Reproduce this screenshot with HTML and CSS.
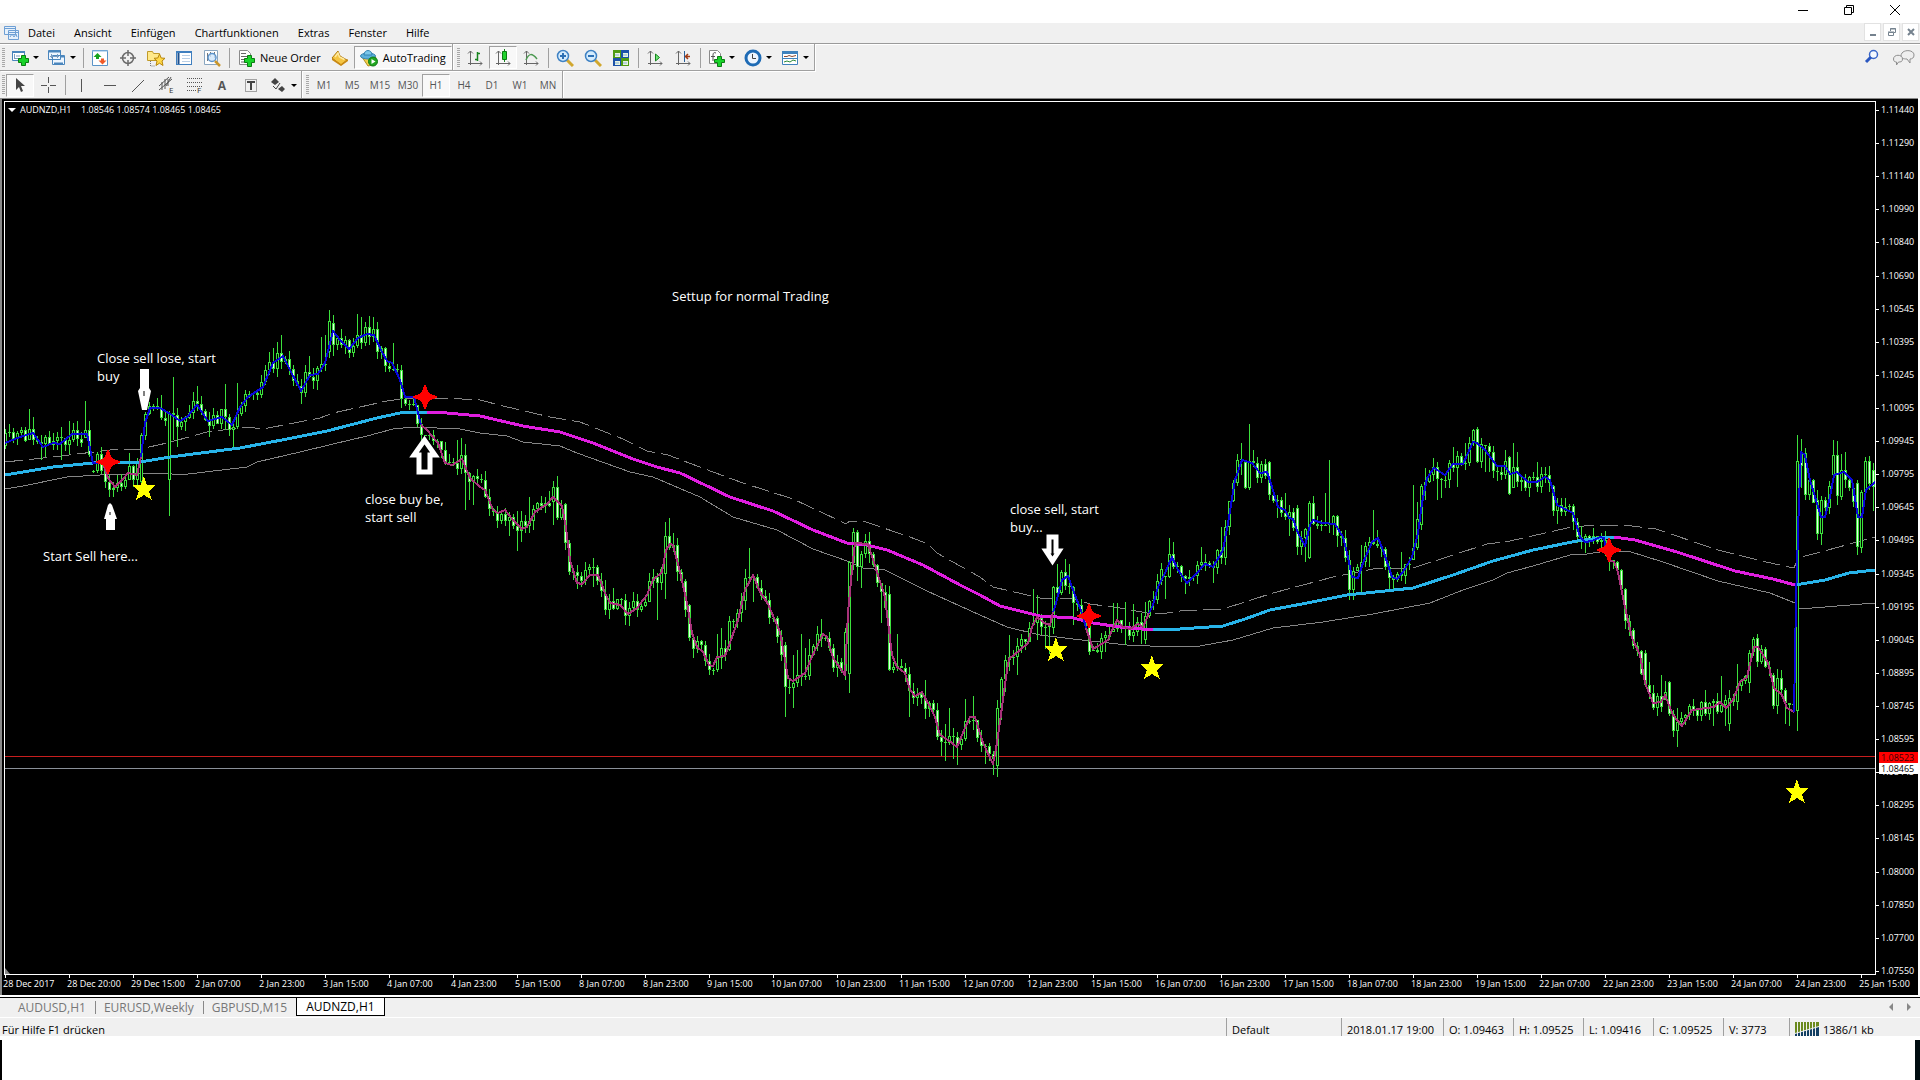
FILE: index.html
```html
<!DOCTYPE html>
<html lang="de">
<head>
  <meta charset="utf-8">
  <title>AUDNZD,H1</title>
  <link rel="stylesheet" href="styles.css">
</head>

<body>
  <div class="titlebar">
    <button class="win-btn" aria-label="Minimize"><svg width="12" height="12"><path d="M1 6.5h10" stroke="#000"/></svg></button>
    <button class="win-btn" aria-label="Restore"><svg width="12" height="12" fill="none" stroke="#000"><path d="M1.5 3.5h7v7h-7zM3.5 3V1.500h7v7H9"/></svg></button>
    <button class="win-btn" aria-label="Close"><svg width="12" height="12"><path d="M1 1l10 10M11 1L1 11" stroke="#000"/></svg></button>
  </div>

  <nav class="menubar">
    <svg class="app-icon" width="16" height="16" fill="#e6f1fc" stroke="#6e9fd4"><path d="M.5 1.500h11v8H.5zM.5 3.500h11M4.500 5.500h10v9h-10zM4.500 7.500h10"/><path d="M6 12l2-3 2 3 2-3 1 3" fill="none"/></svg>
    <button>Datei</button>
    <button>Ansicht</button>
    <button>Einfügen</button>
    <button>Chartfunktionen</button>
    <button>Extras</button>
    <button>Fenster</button>
    <button>Hilfe</button>
    <div class="mdi-buttons">
      <button aria-label="Minimize chart"><svg width="10" height="10"><path d="M2 8h6" stroke="#75828e" stroke-width="2"/></svg></button>
      <button aria-label="Restore chart"><svg width="10" height="10" fill="none" stroke="#75828e"><path d="M1.500 5.500h5v3h-5zM1 5h6M3.500 4V1.500h5v4H7M3 2h6"/></svg></button>
      <button aria-label="Close chart"><svg width="10" height="10"><path d="M2 2l6 6M8 2L2 8" stroke="#75828e" stroke-width="2"/></svg></button>
    </div>
  </nav>

  <div class="toolbars">
    <div class="toolbar-rows">
      <div class="toolbar">
        <div class="group">
          <span class="grip"></span>
          <button class="tool drop" aria-label="New chart"><svg width="18" height="18"><path d="M1.500 2.500h12v9h-12z" fill="#fff" stroke="#4a86bd"/><path d="M1 3h13" stroke="#4a86bd" stroke-width="2"/><path d="M3.500 5v5M3 9.500h8M5 7h4" stroke="#7b9cc0" fill="none"/><path d="M10.500 6.500h4v3h3v4h-3v3h-4v-3h-3v-4h3z" fill="#19d32a" stroke="#0b7d12"/></svg></button>
          <button class="tool drop" aria-label="Profiles"><svg width="18" height="18" fill="#eef6ff" stroke="#4a86bd"><path d="M4.500 6.500h12v9h-12zM.5 1.500h12v9H.5z"/><path d="M1 2.500h12M6 14.500h9M13 7.500h3" stroke-width="2"/><path d="M3.500 5v4M2 7.500h9M9.500 5v4" stroke="#7b9cc0"/></svg></button>
          <span class="sep"></span>
          <button class="tool" aria-label="Market watch"><svg width="18" height="18"><path d="M1.500 1.500h15v15h-15z" fill="#fff" stroke="#5b94c8"/><path d="M1 2h16" stroke="#8ab9e2"/><path d="M6.500 4l4 4H8v2H5V8H2.500z" fill="#16a31d"/><path d="M11.500 15.500l-4-4H10v-2h3v2h2.500z" fill="#f05a28"/></svg></button>
          <button class="tool" aria-label="Data window"><svg width="18" height="18" fill="none" stroke="#6b6b6b"><circle cx="9" cy="9" r="5.500" stroke-width="1.500"/><path d="M9 1v6M9 11v6M1 9h6M11 9h6" stroke-width="1.500"/></svg></button>
          <button class="tool" aria-label="Navigator"><svg width="18" height="18"><path d="M.5 2.500h5l1 2h6v7H.5z" fill="#ffe98a" stroke="#c09a2a"/><path d="M3.500 12v5h4" fill="none" stroke="#777" stroke-dasharray="1 1"/><path d="M12.500 5l1.700 4 3.800.3-3 2.700 1 4.500-3.500-2.300L9 16.500l1-4.500-3-2.700 3.800-.3z" fill="#ffd94a" stroke="#b8860b"/></svg></button>
          <button class="tool" aria-label="Terminal"><svg width="18" height="18"><rect x="1.500" y="2.500" width="15" height="13" fill="#fff" stroke="#3f7fbf"/><path d="M1 3h16" stroke="#3f7fbf" stroke-width="2"/><path d="M3.500 4v11" stroke="#1d4f8c" stroke-width="2"/><path d="M7 6.500h8M7 9.500h8M7 12.500h8" stroke="#b9cfe6"/></svg></button>
          <button class="tool" aria-label="Strategy tester"><svg width="18" height="18"><path d="M1.500 1.500h13v14h-13z" fill="#fff" stroke="#8aa6c0"/><path d="M4.500 4v8M7.500 3v5M11.500 3v6M4 6.500h3" stroke="#777"/><circle cx="9" cy="8.500" r="4" fill="#cfe6fb" fill-opacity=".8" stroke="#5d94cc" stroke-width="1.500"/><path d="M12 12l5 5" stroke="#c9962c" stroke-width="2.500"/></svg></button>
          <span class="sep"></span>
          <button class="tool wide"><svg width="18" height="18"><path d="M2.500 1.500h8l3 3v11h-11z" fill="#fff" stroke="#8a8a8a"/><path d="M4 4.500h5M4 7.500h7M4 10.500h4M4 13h4" stroke="#666"/><path d="M10.500 6.500h4v3h3v4h-3v4h-4v-4h-3v-4h3z" fill="#19d32a" stroke="#0b7d12"/></svg>Neue Order</button>
          <button class="tool" aria-label="MetaEditor"><svg width="18" height="18"><path d="M1 9l6-7 2 5 7 4-6 5z" fill="#f4c542" stroke="#b07a10"/><path d="M1 9v2l9 6 7-5v-2l-7 5z" fill="#c98914"/><path d="M4 8l3-4 1.500 4 5 2.500" fill="none" stroke="#ffeaa0" stroke-width="1.500"/></svg></button>
          <button class="tool wide pressed"><svg width="18" height="18"><path d="M2 8h14l-4 8-4 1z" fill="#f1cf4c" stroke="#b08e20"/><ellipse cx="8" cy="7" rx="7.500" ry="3" fill="#5bb0dc" stroke="#3583b0"/><path d="M4 6c0-6 8-6 8 0z" fill="#7cc7ea" stroke="#3583b0"/><circle cx="13" cy="12.500" r="4.500" fill="#21a621" stroke="#0d7a12"/><path d="M11.500 10l4 2.500-4 2.500z" fill="#fff"/></svg>AutoTrading</button>
        </div>
        <div class="group">
          <span class="grip"></span>
          <button class="tool" aria-label="Bar chart"><svg width="18" height="18" fill="none" stroke="#666"><path d="M4.500 2v14M2 14.500h14M2 4.500l2.500-2.500L7 4.500M14 12.500l2 2-2 2"/><path d="M11.500 3v9M9 10.500h2M12 4.500h2" stroke="#16831d" stroke-width="1.500"/></svg></button>
          <button class="tool pressed" aria-label="Candlesticks"><svg width="18" height="18" fill="none" stroke="#666"><path d="M4.500 2v14M2 14.500h14M2 4.500l2.500-2.500L7 4.500M14 12.500l2 2-2 2"/><path d="M10.500 0v13" stroke="#16831d"/><path d="M8.500 2.500h4v8h-4z" fill="#22d32e" stroke="#0b7d12"/></svg></button>
          <button class="tool" aria-label="Line chart"><svg width="18" height="18" fill="none" stroke="#666"><path d="M4.500 2v14M2 14.500h14M2 4.500l2.500-2.500L7 4.500M14 12.500l2 2-2 2"/><path d="M4 11c3-7 6-7 11-1" stroke="#4b9950" stroke-width="1.500"/></svg></button>
          <span class="sep"></span>
          <button class="tool" aria-label="Zoom in"><svg width="18" height="18"><path d="M11 11l6 6" stroke="#d1a72e" stroke-width="3"/><circle cx="7" cy="7" r="5.500" fill="#d5ecfd" stroke="#3f82c4" stroke-width="1.500"/><path d="M4 7h6M7 4v6" stroke="#2d70b5" stroke-width="2"/></svg></button>
          <button class="tool" aria-label="Zoom out"><svg width="18" height="18"><path d="M11 11l6 6" stroke="#d1a72e" stroke-width="3"/><circle cx="7" cy="7" r="5.500" fill="#d5ecfd" stroke="#3f82c4" stroke-width="1.500"/><path d="M4 7h6" stroke="#2d70b5" stroke-width="2"/></svg></button>
          <button class="tool" aria-label="Tile windows"><svg width="18" height="18"><path d="M1 1h8v8H1zM9 9h8v8H9z" fill="#4f9b14"/><path d="M9 1h8v8H9zM1 9h8v8H1z" fill="#1d52a8"/><path d="M3 4h5v4H3zM11 4h5v4h-5zM3 12h5v4H3zM11 12h5v4h-5z" fill="#eaf4e0"/><path d="M3 6h4M11 6h4M3 14h4M11 14h4" stroke="#86b3d6"/></svg></button>
          <span class="sep"></span>
          <button class="tool" aria-label="Auto scroll"><svg width="18" height="18" fill="none" stroke="#666"><path d="M4.500 2v14M2 14.500h14M2 4.500l2.500-2.500L7 4.500M14 12.500l2 2-2 2"/><path d="M9.500 5l4 3.500-4 3.500z" fill="#6fe678" stroke="#16831d"/></svg></button>
          <button class="tool" aria-label="Chart shift"><svg width="18" height="18" fill="none" stroke="#666"><path d="M4.500 2v14M2 14.500h14M2 4.500l2.500-2.500L7 4.500M14 12.500l2 2-2 2"/><path d="M10.500 2v11" stroke="#27609b"/><path d="M16 7.500h-4M14 5l-2.500 2.500L14 10" stroke="#a03b16" stroke-width="1.500"/></svg></button>
          <span class="sep"></span>
          <button class="tool drop" aria-label="Indicators"><svg width="18" height="18"><path d="M2.500 1.500h8l3 3v10h-11z" fill="#fff" stroke="#8a8a8a"/><path d="M9 4c-2-1-3 0-3 2v6M4 7.500h4" fill="none" stroke="#555"/><path d="M10.500 7.500h4v3h3v3h-3v4h-4v-4h-3v-3h3z" fill="#19d32a" stroke="#0b7d12"/></svg></button>
          <button class="tool drop" aria-label="Periods"><svg width="18" height="18"><circle cx="9" cy="9" r="7" fill="#eef6ff" stroke="#1e6bb5" stroke-width="3"/><path d="M8.500 5v4.500H12" fill="none" stroke="#444"/></svg></button>
          <button class="tool drop" aria-label="Templates"><svg width="18" height="18"><path d="M1.500 2.500h15v13h-15zM1 9.500h16" fill="#fff" stroke="#3f82bd"/><path d="M1 3.500h16" stroke="#3f82bd" stroke-width="3"/><path d="M3 7.500h3l2-1 3 1 4-1" fill="none" stroke="#8c4a30"/><path d="M3 13l3-1 3 1 3-2 3 1" fill="none" stroke="#2c8c3a"/></svg></button>
        </div>
      </div>

      <div class="toolbar lines">
        <div class="group">
          <span class="grip"></span>
          <button class="tool pressed" aria-label="Cursor"><svg width="18" height="18"><path d="M5 2v12l3-3 2 5 2-1-2-5h4z" fill="#444"/></svg></button>
          <button class="tool" aria-label="Crosshair"><svg width="18" height="18"><path d="M9.500 1v6M9.500 11v6M2 9.500h6M11 9.500h6" stroke="#555"/></svg></button>
          <span class="sep"></span>
          <button class="tool" aria-label="Vertical line"><svg width="18" height="18"><path d="M8.500 3v13" stroke="#555"/></svg></button>
          <button class="tool" aria-label="Horizontal line"><svg width="18" height="18"><path d="M3 9.500h12" stroke="#555"/></svg></button>
          <button class="tool" aria-label="Trendline"><svg width="18" height="18"><path d="M3 16L15 4" stroke="#555"/></svg></button>
          <button class="tool" aria-label="Equidistant channel"><svg width="18" height="20" stroke="#555" fill="none"><path d="M2 11L12 2M2 15L15 4M5 7v8M8 4v10M11 4v7M14 2L9 11"/><text class="glyph" x="12" y="18">E</text></svg></button>
          <button class="tool" aria-label="Fibonacci"><svg width="18" height="20"><path d="M2 3.500h15M2 7.500h15M2 11.500h15M2 15.500h9" stroke="#555" stroke-dasharray="1 1"/><text class="glyph" x="12" y="18">F</text></svg></button>
          <button class="tool letter" aria-label="Text">A</button>
          <button class="tool" aria-label="Text label"><svg width="18" height="18"><path d="M4.500 3.500h11v12h-11z" fill="none" stroke="#555" stroke-dasharray="1 1"/><path d="M6 6h8M10 6v8" stroke="#444" stroke-width="2"/></svg></button>
          <button class="tool drop" aria-label="Arrows"><svg width="18" height="18" fill="#444"><path d="M6 2l4 4-4 3-4-3zM13 10l3 3-3 3-4-3z"/><path d="M4 10l3 3 4-6" stroke="#444" fill="none"/></svg></button>
        </div>
        <div class="group periods">
          <span class="grip"></span>
          <button class="tool">M1</button>
          <button class="tool">M5</button>
          <button class="tool">M15</button>
          <button class="tool">M30</button>
          <button class="tool pressed">H1</button>
          <button class="tool">H4</button>
          <button class="tool">D1</button>
          <button class="tool">W1</button>
          <button class="tool">MN</button>
        </div>
      </div>
    </div>
    <div class="side-tools">
      <button aria-label="Search"><svg width="16" height="16"><circle cx="9.500" cy="5.500" r="4" fill="#f5f9ff" stroke="#3a66c8" stroke-width="1.500"/><path d="M7 8l-5 5" stroke="#2a57c0" stroke-width="3"/></svg></button>
      <button aria-label="Chat"><svg width="24" height="18" fill="#eee" stroke="#8f8f8f"><path d="M9 7c0-7 13-7 13-1 0 3-2 4-4 4v4l-3-4c-4 0-6-1-6-3z"/><path d="M1.500 10c0-5 9-5 9 0 0 3-2 3-4 3l-2 3v-3c-2 0-3-1-3-3z"/></svg></button>
    </div>
  </div>

  <main class="chart">
    <svg class="plot" id="plot" viewBox="5 102 1870 872"></svg>
    <div class="price-axis" id="prices">
      <span class="tag ask">1.08523</span>
      <span class="tag bid">1.08465</span>
    </div>
    <div class="time-axis" id="times"></div>
  </main>

  <div class="tabs">
    <button>AUDUSD,H1</button>
    <button>EURUSD,Weekly</button>
    <button>GBPUSD,M15</button>
    <button class="active">AUDNZD,H1</button>
    <div class="tab-scroll">
      <button aria-label="Scroll left"><svg width="6" height="8"><path d="M5 0v8L1 4z" fill="#888"/></svg></button>
      <button aria-label="Scroll right"><svg width="6" height="8"><path d="M1 0v8l4-4z" fill="#888"/></svg></button>
    </div>
  </div>

  <footer class="statusbar">
    <span class="hint">Für Hilfe F1 drücken</span>
    <span class="cell profile">Default</span>
    <span class="cell date">2018.01.17 19:00</span>
    <span class="cell">O: 1.09463</span>
    <span class="cell">H: 1.09525</span>
    <span class="cell">L: 1.09416</span>
    <span class="cell">C: 1.09525</span>
    <span class="cell volume">V: 3773</span>
    <span class="cell traffic"><svg width="24" height="14"><path d="M0 0h24v4L0 11z" fill="#6b8a1e"/><path d="M0 12l24-7v9H0z" fill="#123f63"/><path d="M2.500 0v14M5.500 0v14M8.500 0v14M11.500 0v14M14.500 0v14M17.500 0v14M20.500 0v14" stroke="#f0f0f0"/></svg>1386/1 kb</span>
  </footer>
  <div class="below"></div>

  <script src="chart.js"></script>
</body>
</html>
```
FILE: styles.css
```css
* {
  box-sizing: border-box;
}

body {
  margin: 0;
  min-height: 100vh;
  display: flex;
  flex-direction: column;
  background-color: #fff;
  font-family: "Open Sans", "Noto Sans", sans-serif;
  font-size: 11px;
  color: #000;
}

button {
  font: inherit;
  color: inherit;
  background: none;
  border: none;
  padding: 0;
  display: flex;
  align-items: center;
  justify-content: center;
}

/* window and menu */
.titlebar {
  display: flex;
  justify-content: flex-end;
  height: 23px;
  padding-right: 2px;
}

.win-btn {
  width: 46px;
  height: 20px;
}

.menubar {
  display: flex;
  height: 20px;
  padding-left: 4px;
  background-color: #f0f0f0;
}

.menubar > button {
  padding: 0 10px 2px 9px;
}

.app-icon {
  margin-top: 2px;
  margin-right: -1px;
}

.mdi-buttons {
  display: flex;
  gap: 2px;
  margin-left: auto;
  padding-right: 1px;
}

.mdi-buttons button {
  width: 17px;
  height: 18px;
  background-color: #fff;
  border: 1px solid #e2e2e2;
}

/* toolbars */
.toolbars {
  display: flex;
  justify-content: space-between;
  background-color: #f0f0f0;
  border-top: 1px solid #9a9a9a;
  box-shadow: inset 0 1px #fff;
}

.toolbar {
  display: flex;
  height: 27px;
}

.group {
  display: flex;
  align-items: center;
  padding: 1px 0 0 2px;
  border-right: 1px solid #a0a0a0;
  border-bottom: 1px solid #a0a0a0;
  box-shadow: 1px 1px #fff;
}

.lines .group {
  border-bottom: none;
}

.grip {
  width: 3px;
  height: 20px;
  margin-right: 1px;
  background: repeating-linear-gradient(#a8a8a8 0 1px, #f0f0f0 1px 2px);
}

.group + .group .grip {
  margin-left: 2px;
}

.sep {
  width: 1px;
  height: 20px;
  margin: 0 2px 0 3px;
  background-color: #a0a0a0;
}

.tool {
  width: 28px;
  height: 23px;
  color: #000;
}

.drop {
  width: 37px;
  gap: 4px;
}

.drop::after {
  content: "";
  border: 3px solid transparent;
  border-top-color: #000;
  border-bottom: none;
}

.wide {
  width: auto;
  padding: 0 5px;
  gap: 5px;
}

.pressed {
  border: 1px solid #a0a0a0;
  border-right-color: #fff;
  border-bottom-color: #fff;
  background-color: #f8f8f8;
}

.periods .tool {
  color: #555;
  font-size: 10px;
}

.letter {
  color: #555;
  font-size: 12px;
  font-weight: bold;
}

.glyph {
  font-size: 8px;
  fill: #333;
  stroke: none;
}

.side-tools {
  display: flex;
  gap: 12px;
  padding: 5px 4px 0 0;
  align-items: flex-start;
}

/* chart */
.chart {
  display: grid;
  grid-template-columns: 1fr 42px;
  margin-right: 2px;
  padding-left: 2px;
  padding-top: 2px;
  position: relative;
  background-color: #000;
  border-top: 1px solid #888;
  border-left: 2px solid #888;
  color: #fff;
  font-size: 9px;
  line-height: 12px;
}

.plot {
  display: block;
  width: 100%;
  border: 1px solid #fff;
}

.price-axis {
  grid-column: 2;
  grid-row: 1 / 3;
  display: flex;
  flex-direction: column;
  justify-content: space-between;
  padding: 3px 0 18px;
  position: relative;
}

.price-axis span {
  padding-left: 5px;
}

.price {
  display: flex;
}

.price::before {
  content: "";
  width: 3px;
  height: 1px;
  margin: 6px 2px 0 -5px;
  background-color: #fff;
}

.tag {
  position: absolute;
  left: 3px;
  right: 0;
  line-height: 11px;
}

.price-axis .tag {
  padding-left: 2px;
}

.ask {
  bottom: 26%;
  background-color: #f00;
  color: #300;
}

.bid {
  top: 74%;
  background-color: #fff;
  color: #000;
}

.time-axis {
  display: grid;
  grid-template-columns: repeat(30, calc(100% * 64 / 1872));
  height: 20px;
  white-space: nowrap;
}

.time-axis span {
  position: relative;
  left: -1px;
  padding-top: 3px;
}

.time-axis span::before {
  content: "";
  position: absolute;
  top: 0;
  left: 2px;
  width: 1px;
  height: 3px;
  background-color: #fff;
}

.title {
  font-size: 9px;
  fill: #fff;
}

.note {
  font-size: 13px;
  fill: #fff;
}

/* bottom bars */
.tabs {
  display: flex;
  height: 21px;
  margin-top: 2px;
  padding: 0 8px 1px 9px;
  background-color: #f0f0f0;
  border-top: 1px solid #000;
  border-bottom: 1px solid #fff;
  color: #777;
  font-size: 12px;
}

.tabs > button {
  padding: 0 9px;
  position: relative;
}

.tabs > button + button:not(.active)::before {
  content: "";
  position: absolute;
  left: 0;
  top: 3px;
  height: 13px;
  border-left: 1px solid #888;
}

.tabs .active {
  background-color: #fff;
  color: #000;
  border: 1px solid #000;
  border-top: none;
}

.tab-scroll {
  display: flex;
  gap: 12px;
  margin-left: auto;
}

.statusbar {
  display: flex;
  height: 18px;
  padding-left: 2px;
  background-color: #f0f0f0;
  line-height: 24px;
}

.hint {
  flex: 1;
}

.cell {
  width: 70px;
  padding-left: 5px;
  border-left: 1px solid #a0a0a0;
  white-space: nowrap;
}

.profile {
  width: 115px;
}

.date {
  width: 102px;
}

.volume {
  width: 66px;
}

.traffic {
  display: flex;
  gap: 4px;
  width: 131px;
  padding-top: 4px;
  line-height: 16px;
}

.below {
  flex: 1;
  margin-top: 4px;
  border-left: 2px solid #000;
  border-right: 5px solid #000c10;
}
```
FILE: chart.js
```js
const plot = document.getElementById("plot");

const times = ["28 Dec 2017", "28 Dec 20:00", "29 Dec 15:00", "2 Jan 07:00", "2 Jan 23:00", "3 Jan 15:00",
  "4 Jan 07:00", "4 Jan 23:00", "5 Jan 15:00", "8 Jan 07:00", "8 Jan 23:00", "9 Jan 15:00", "10 Jan 07:00",
  "10 Jan 23:00", "11 Jan 15:00", "12 Jan 07:00", "12 Jan 23:00", "15 Jan 15:00", "16 Jan 07:00",
  "16 Jan 23:00", "17 Jan 15:00", "18 Jan 07:00", "18 Jan 23:00", "19 Jan 15:00", "22 Jan 07:00",
  "22 Jan 23:00", "23 Jan 15:00", "24 Jan 07:00", "24 Jan 23:00", "25 Jan 15:00"];

const prices = ["1.11440", "1.11290", "1.11140", "1.10990", "1.10840", "1.10690", "1.10545", "1.10395",
  "1.10245", "1.10095", "1.09945", "1.09795", "1.09645", "1.09495", "1.09345", "1.09195", "1.09045",
  "1.08895", "1.08745", "1.08595", "1.08445", "1.08295", "1.08145", "1.08000", "1.07850", "1.07700", "1.07550"];

// fast average, split where the trend colour changes
const fast = [
  ["#0808d8", [5,443, 20,437, 33,433, 43,447, 53,443, 60,444, 72,434, 87,434, 93,463, 103,463]],
  ["#a8327a", [103,463, 108,478, 115,487, 122,480, 128,473, 137,475, 141,457]],
  ["#0808d8", [141,457, 145,423, 150,408, 160,408, 172,415, 180,421, 187,417, 197,405, 208,421, 222,417,
    232,425, 240,407, 248,397, 263,387, 273,363, 283,356, 290,370, 301,391, 310,375, 318,374, 325,363,
    333,331, 340,340, 349,349, 358,338, 367,334, 374,335, 382,352, 387,361, 392,363, 400,380, 405,397,
    414,397, 421,425]],
  ["#a8327a", [421,425, 427,430, 438,443, 445,463, 452,465, 462,459, 470,478, 480,487, 485,490, 493,510,
    498,513, 505,510, 513,520, 522,529, 527,527, 535,512, 547,504, 553,497, 562,506, 566,528, 570,560,
    577,583, 582,584, 590,575, 598,575, 605,593, 610,603, 620,605, 628,614, 637,608, 647,595, 653,580,
    662,572, 666,550, 670,544, 673,545, 680,572, 687,603, 692,633, 697,647, 703,652, 709,665, 713,666,
    717,657, 725,656, 732,637, 738,620, 745,590, 753,575, 760,592, 768,604, 780,632, 785,660, 788,678,
    793,681, 805,673, 815,650, 823,634, 827,637, 833,658, 845,675, 848,613, 852,570, 855,543, 868,544,
    877,572, 885,597, 892,655, 897,667, 905,673, 910,690, 915,696, 922,692, 930,707, 935,717, 940,735,
    948,740, 957,747, 965,728, 970,717, 975,717, 983,743, 993,764, 997,743, 1002,707, 1007,670,
    1009,659, 1020,650, 1028,643, 1032,627, 1037,617, 1044,623, 1050,625, 1053,612]],
  ["#0808d8", [1053,612, 1055,607, 1062,580, 1068,576, 1073,590, 1082,613, 1086,628]],
  ["#a8327a", [1086,628, 1093,649, 1100,645, 1108,640, 1112,630, 1117,620, 1123,627, 1130,629, 1138,624,
    1143,627, 1149,613]],
  ["#0808d8", [1149,613, 1153,605, 1158,587, 1165,573, 1172,557, 1178,570, 1187,583, 1195,575, 1205,564,
    1213,567, 1223,550, 1228,523, 1235,480, 1242,460, 1252,463, 1260,473, 1267,472, 1272,487, 1278,507,
    1285,510, 1289,518, 1293,519, 1298,533, 1305,546, 1310,525, 1313,520, 1322,523, 1335,524, 1343,537,
    1347,553, 1352,577, 1358,578, 1363,563, 1372,542, 1378,538, 1383,550, 1392,577, 1397,579, 1403,572,
    1412,557, 1418,533, 1422,503, 1427,478, 1434,468, 1445,475, 1453,464, 1463,464, 1473,442, 1477,443,
    1485,450, 1497,466, 1505,466, 1510,474, 1517,472, 1528,482, 1537,482, 1545,477, 1550,480, 1557,505,
    1573,513, 1580,537, 1585,542, 1592,541, 1600,537, 1604,538, 1606,548]],
  ["#a8327a", [1606,548, 1609,560, 1614,562, 1618,572, 1625,607, 1632,638, 1640,655, 1645,683, 1653,703,
    1661,702, 1665,695, 1673,715, 1682,726, 1692,710, 1714,707, 1720,702, 1726,708, 1733,700, 1740,682,
    1747,677, 1754,647, 1758,647, 1768,663, 1774,688, 1782,695, 1787,708, 1794,712]],
  ["#0808d8", [1794,712, 1796,600, 1799,500, 1801,452, 1805,455, 1810,480, 1816,500, 1821,517, 1825,517,
    1830,497, 1834,475, 1844,472, 1852,480, 1858,517, 1862,517, 1866,490, 1875,482]]
];

const slow = [
  ["#28b4ea", [5,475, 53,467, 93,463, 140,462, 170,457, 240,448, 287,439, 327,431, 377,418, 400,413, 427,412]],
  ["#e01ee0", [427,412, 447,413, 480,416, 523,426, 560,432, 593,443, 633,459, 657,467, 680,473, 730,497,
    773,511, 813,530, 847,543, 867,545, 887,550, 923,565, 960,585, 980,595, 1000,606, 1040,616, 1073,618,
    1093,623, 1120,627, 1153,630]],
  ["#28b4ea", [1153,630, 1180,629, 1223,626, 1245,619, 1270,610, 1307,603, 1347,595, 1413,588, 1453,575,
    1493,561, 1533,550, 1577,541, 1600,538, 1614,537]],
  ["#e01ee0", [1614,537, 1635,540, 1677,552, 1735,571, 1773,579, 1795,585]],
  ["#28b4ea", [1795,585, 1825,580, 1849,573, 1875,570]]
];

const upper = [5,462, 53,457, 110,450, 140,449, 167,443, 207,432, 247,427, 263,429, 320,418, 333,413, 387,401,
  407,398, 443,398, 480,400, 503,406, 550,417, 580,422, 623,439, 647,451, 668,455, 713,472, 743,483, 793,499,
  838,520, 846,524, 850,521, 863,521, 910,537, 928,544, 937,553, 960,566, 980,577, 993,587, 1040,598,
  1073,599, 1090,604, 1120,608, 1147,613, 1167,613, 1180,611, 1223,609, 1273,593, 1333,577, 1373,569,
  1413,568, 1487,544, 1510,541, 1567,528, 1593,525, 1632,526, 1656,529, 1718,550, 1766,562, 1794,568,
  1798,558, 1839,547, 1875,537];

const lower = [5,489, 23,486, 67,477, 100,475, 133,474, 163,473, 180,475, 247,467, 257,462, 300,452, 333,444,
  367,436, 393,429, 413,427, 460,429, 480,433, 507,436, 523,442, 560,446, 577,453, 630,472, 653,477, 700,497,
  733,517, 777,530, 813,549, 850,562, 863,568, 885,570, 927,591, 960,606, 980,615, 1007,627, 1040,635,
  1073,639, 1127,645, 1173,647, 1200,646, 1233,640, 1273,628, 1323,622, 1373,614, 1430,603, 1463,590,
  1493,580, 1507,573, 1533,566, 1570,555, 1587,554, 1600,552, 1628,551, 1663,562, 1718,581, 1770,593,
  1795,603, 1799,609, 1825,607, 1875,603];

// x: [high, low, open, close], 0 keeps the derived value
const bars = {
  29:[409,440], 33:[417,0], 41:[0,460], 45:[0,457], 61:[427,460], 69:[421,0], 73:[423,0], 85:[401,438],
  89:[421,457], 93:[470,473,472,471], 97:[452,473], 109:[475,497], 113:[0,497], 129:[453,0], 133:[0,487],
  137:[0,486], 141:[433,485,482,435], 145:[412,440,436,414], 161:[395,420], 169:[411,516,480,413], 173:[377,440],
  177:[408,447], 197:[386,0], 209:[0,437], 225:[384,430], 233:[0,447], 237:[383,0], 269:[352,0], 273:[348,0],
  277:[342,0], 281:[335,0], 301:[0,404], 309:[356,0], 317:[0,390], 321:[337,0], 325:[335,0],
  329:[310,358,352,321], 333:[315,356,323,345], 357:[314,0], 361:[317,0], 369:[316,0], 373:[317,0], 393:[343,0],
  405:[0,406], 457:[440,0], 461:[438,0], 465:[444,510], 469:[0,500], 473:[0,505], 509:[0,536], 517:[511,551],
  521:[511,542], 529:[497,0], 549:[491,0], 553:[481,525,502,487], 557:[476,520,487,518], 565:[503,550,504,543],
  569:[540,575,543,572], 577:[0,589], 593:[558,587], 605:[580,615,594,610], 613:[588,0], 625:[0,625],
  629:[0,626], 657:[573,620], 665:[522,599,574,536], 669:[518,550,536,548], 673:[533,0], 689:[604,641,605,638],
  709:[0,675], 713:[0,675], 717:[634,0], 721:[628,669], 729:[616,651,650,621], 745:[569,610], 749:[548,584],
  753:[0,602], 785:[642,717,645,687], 789:[0,694], 793:[655,708], 797:[650,687], 801:[634,0], 805:[648,0],
  809:[639,680], 821:[619,0], 845:[0,680], 849:[561,693,674,562], 853:[528,570,563,532], 857:[530,581,532,567],
  861:[551,588,567,554], 865:[534,0], 869:[532,563], 881:[583,623], 889:[586,671,594,670], 897:[634,0],
  909:[667,717], 925:[680,719], 941:[0,756], 945:[724,761], 949:[708,0], 953:[728,759], 957:[0,765],
  965:[699,0], 973:[696,0], 985:[0,764], 993:[0,775], 997:[700,777,766,708], 1001:[677,720,708,679],
  1005:[655,692,679,660], 1009:[635,671], 1017:[0,675], 1033:[589,625], 1037:[595,640], 1045:[0,649],
  1049:[0,654], 1053:[586,634,628,587], 1057:[564,600], 1061:[570,0], 1065:[559,590], 1069:[564,0],
  1073:[586,625], 1089:[0,655], 1093:[0,651], 1105:[0,652], 1113:[603,632], 1117:[603,0], 1125:[602,645],
  1133:[604,0], 1141:[0,644], 1145:[602,644,640,616], 1165:[576,599], 1169:[538,0], 1173:[542,0], 1185:[0,594],
  1201:[547,0], 1213:[0,583], 1221:[527,0], 1241:[443,475], 1245:[460,489,462,488], 1249:[424,490,488,461],
  1253:[450,0], 1269:[461,500,462,495], 1277:[0,518], 1285:[493,0], 1289:[505,536], 1297:[505,555,508,547],
  1305:[528,562], 1309:[501,559,558,503], 1313:[496,0], 1325:[493,0], 1329:[460,533], 1333:[515,535],
  1337:[515,547], 1345:[530,562], 1349:[550,600,560,590], 1353:[567,600], 1361:[545,592], 1369:[0,567],
  1373:[510,545], 1377:[530,0], 1389:[0,589], 1393:[0,590], 1401:[552,0], 1413:[485,560], 1417:[502,0],
  1421:[484,530,525,486], 1425:[468,500], 1433:[458,0], 1437:[462,500], 1441:[0,498], 1453:[447,0],
  1457:[0,487], 1461:[453,0], 1465:[443,0], 1473:[429,446,441,430], 1477:[427,463,429,462], 1485:[445,472],
  1489:[443,472], 1505:[450,0], 1509:[456,495,457,494], 1513:[443,488], 1517:[452,487], 1529:[0,497],
  1537:[462,0], 1553:[485,516,486,511], 1557:[0,524], 1581:[526,549], 1585:[0,553], 1609:[550,571],
  1645:[650,687,653,685], 1649:[662,0], 1657:[0,716], 1661:[675,0], 1665:[681,700], 1669:[681,716,682,714],
  1673:[710,737,714,731], 1677:[708,747,731,722], 1693:[699,0], 1705:[690,0], 1713:[0,726], 1721:[676,0],
  1725:[695,726], 1729:[690,731,724,698], 1737:[664,0], 1749:[650,693,683,653], 1753:[637,656,652,639],
  1757:[634,667,638,662], 1773:[673,709,675,706], 1777:[669,714,706,678], 1785:[0,724], 1789:[0,726],
  1797:[435,731,711,461], 1801:[439,488,453,466], 1805:[448,500,453,495], 1817:[490,540,500,534],
  1821:[496,545,534,500], 1833:[440,480,475,455], 1837:[441,505,455,496], 1841:[454,500,497,470], 1845:[452,0],
  1857:[480,555,483,547], 1861:[490,553,548,492], 1865:[457,500,492,461], 1869:[456,0], 1873:[463,511,470,487]
};

function line(points, color, width, extra = "") {
  return `<polyline points="${points.join(" ")}" fill="none" stroke="${color}" stroke-width="${width}" ${extra}/>`;
}

// price level of the fast average at x
const track = fast.flatMap((part) => part[1]);
function levelAt(x) {
  for (let i = 0; i < track.length - 2; i += 2) {
    if (x <= track[i + 2] && track[i + 2] > track[i]) {
      const t = (x - track[i]) / (track[i + 2] - track[i]);
      return track[i + 1] + t * (track[i + 3] - track[i + 1]);
    }
  }
  return track[track.length - 1];
}

let seed = 11;
function random() {
  seed = (seed * 16807) % 2147483647;
  return seed / 2147483647;
}

function drawCandles() {
  let svg = "";
  let last = 446;
  for (let x = 5; x < 1875; x += 4) {
    const bar = bars[x] || [0, 0];
    const ahead = x > 1785 && x < 1797 ? x : x + 2;
    const open = bar[2] || last;
    let close = bar[3] || Math.round(levelAt(ahead) + (random() - 0.5) * 18);
    if (bar[0]) close = Math.max(close, bar[0] + 1);
    if (bar[1]) close = Math.min(close, bar[1] - 1);
    let top = Math.min(open, close);
    let bottom = Math.max(open, close);
    if (bar[0]) top = Math.max(top, bar[0]);
    if (bar[1]) bottom = Math.min(bottom, bar[1]);
    const high = bar[0] || top - Math.round(random() * 9);
    const low = bar[1] || bottom + Math.round(random() * 9);
    const height = Math.max(bottom - top, 1);
    svg += `<rect x="${x}" y="${high}" width="1" height="${Math.max(low - high, 1)}" fill="#3ce03c"/>`;
    svg += `<rect x="${x - 1}" y="${top}" width="3" height="${height}" fill="#3ce03c"/>`;
    if (height > 2) {
      svg += `<rect x="${x}" y="${top + 1}" width="1" height="${height - 2}" fill="${close < open ? "#000" : "#e4ffe4"}"/>`;
    }
    last = close;
  }
  return svg;
}

function cross(x, y) {
  return `<path transform="translate(${x} ${y})" d="M0-13l4 9 9 4-9 4-4 9-4-9-9-4 9-4z" fill="#f00"/>`;
}

function star(x, y) {
  return `<path transform="translate(${x} ${y})" d="M0-13l3 9h9l-7 6 3 9-8-5-8 5 3-9-7-6h9z" fill="#ff0"/>`;
}

function note(x, y, ...rows) {
  return rows.map((row, i) => `<text class="note" x="${x}" y="${y + i * 18}">${row}</text>`).join("");
}

plot.innerHTML =
  `<g shape-rendering="crispEdges">
  <path d="M5 756.500h1870" stroke="#c81e1e"/><path d="M5 768.500h1870" stroke="#8a9099"/>` +
  line(upper, "#858585", 1, 'stroke-dasharray="18 6"') +
  line(lower, "#858585", 1) +
  drawCandles() +
  slow.map(([color, points]) => line(points, color, 3)).join("") +
  fast.map(([color, points]) => line(points, color, 2, 'stroke-linejoin="round"')).join("") +
  cross(108, 462) + cross(425, 397) + cross(1089, 616) + cross(1609, 550) +
  star(144, 489) + star(1056, 650) + star(1152, 668) + star(1797, 792) +
  `</g>
  <g fill="#fff">
    <path d="M140 369h9v19l2 3-4 19h-5l-4-19 2-3z"/>
    <path d="M106 530v-11h-2l4-14 2-2 2 2 5 14h-2v11z"/>
  </g>
  <path d="M144 391v5M110 512v3" stroke="#000"/>
  <g fill="none" stroke="#fff" stroke-width="5">
    <path d="M419 472v-17h-5l10.500-15 10.500 15h-5v17z"/>
    <path d="M1049 537h7v14h3l-6.500 10-6.500-10h3z"/>
  </g>` +
  note(97, 363, "Close sell lose, start", "buy") +
  note(43, 561, "Start Sell here...") +
  note(365, 504, "close buy be,", "start sell") +
  note(672, 301, "Settup for normal Trading") +
  note(1010, 514, "close sell, start", "buy...") +
  `<path d="M8 108h8l-4 4z" fill="#fff"/>
  <text class="title" x="20" y="113">AUDNZD,H1</text>
  <text class="title" x="81" y="113">1.08546 1.08574 1.08465 1.08465</text>
  <path d="M5 968l5 6h-5z" fill="#888"/>`;

document.getElementById("prices").insertAdjacentHTML("afterbegin",
  prices.map((price) => `<span class="price">${price}</span>`).join(""));
document.getElementById("times").innerHTML = times.map((time) => `<span>${time}</span>`).join("");
```
